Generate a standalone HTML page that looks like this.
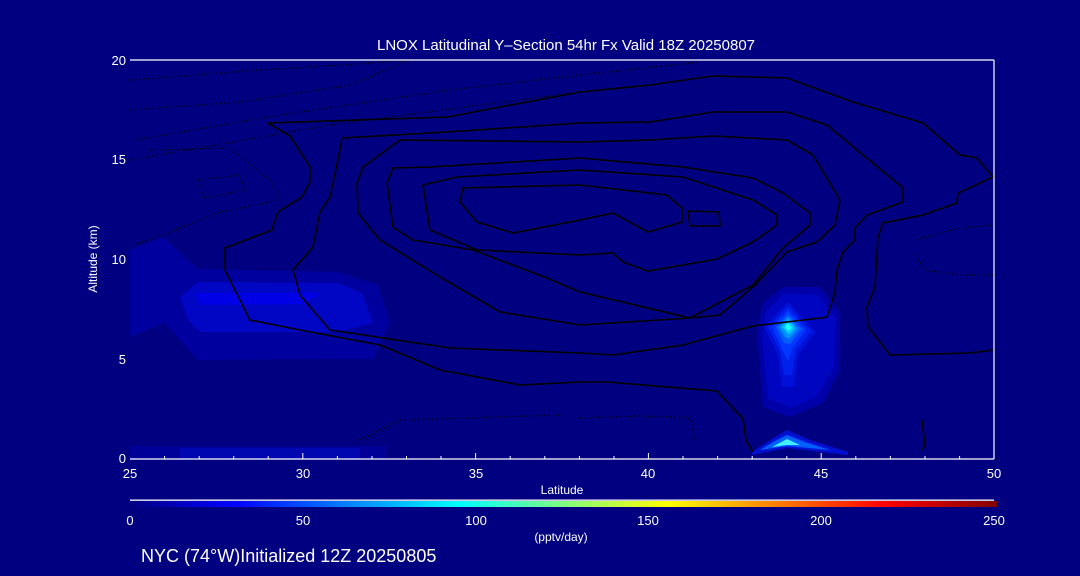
<!DOCTYPE html>
<html><head><meta charset="utf-8"><style>
html,body{margin:0;padding:0;background:#000080;width:1080px;height:576px;overflow:hidden}
svg{display:block}
text{font-family:"Liberation Sans",sans-serif;fill:#fff}
</style></head><body>
<svg width="1080" height="576" viewBox="0 0 1080 576" xmlns="http://www.w3.org/2000/svg">
<defs>
<linearGradient id="jet" x1="0" x2="1" y1="0" y2="0">
<stop offset="0" stop-color="#000080"/><stop offset="0.12" stop-color="#0000ff"/><stop offset="0.38" stop-color="#00ffff"/><stop offset="0.62" stop-color="#ffff00"/><stop offset="0.87" stop-color="#ff0000"/><stop offset="1" stop-color="#800000"/>
</linearGradient>
</defs>
<!-- left patch -->
<polygon points="130,250 163,237 198,269 338,272 378,285 390,323 373,359 198,360 165,323 130,337" fill="#00009e"/>
<polygon points="180,297 198,282 338,283 362,293 373,323 338,332 200,332 188,320" fill="#0006c4"/>
<polygon points="195,293 322,293 302,304 200,305" fill="#0000e6"/>
<polygon points="130,446 385,446 385,459 130,459" fill="#000098"/>
<polygon points="180,448 360,448 360,459 180,459" fill="#0006b0"/>
<!-- plume -->
<polygon points="763,303 783,287 820,287 840,313 840,370 823,403 790,417 763,407 757,330" fill="#0000a8"/>
<polygon points="766,312 784,293 818,295 836,318 834,368 816,397 790,408 768,398 762,335" fill="#0006c0"/>
<g transform="translate(788,327)">
<polygon points="-24,0 0,-25 28,5 10,28 6,60 -6,60 -10,28" fill="#0010d8"/>
<polygon points="-20,0 0,-21 23,4 8,24 4,48 -4,48 -8,24" fill="#0020ec"/>
<polygon points="-16,0 0,-17 18,3 4,22 0,34 -6,22" fill="#0038ff"/>
<polygon points="-12,0 0,-13 14,2 2,17 -4,16" fill="#0060ff"/>
<polygon points="-9,0 0,-10 10,2 1,12 -3,10" fill="#0090ff"/>
<polygon points="-6,0 0,-7 7,1 1,8" fill="#00c8ff"/>
<polygon points="-3,0 0,-4 4,1 0,4" fill="#20ffff"/>
</g>
<!-- bottom arc -->
<path d="M752,452 L770,440 L787,430 L810,440 L848,452 L848,455 L787,448 L752,455 Z" fill="#0010d0"/>
<path d="M760,450 L775,441 L787,435 L805,442 L830,450 L787,446 Z" fill="#0060ff"/>
<path d="M772,447 L787,439 L800,445 L787,445 Z" fill="#40f0ff"/>
<!-- contours -->
<g fill="none" stroke="#000" stroke-width="1.6">
<path d="M268,123 L447,117 L580,92 L650,85 L713,76 L787,78 L853,102 L923,123 L960,155 L977,158 L993,177"/>
<path d="M268,123 L290,136 L310,167 L310,182 L302,197 L278,212 L272,230 L225,248 L225,270 L250,320 L300,330 L380,345 L440,370 L520,385 L580,382 L607,382 L717,391 L743,419 L746,440 L753,452"/>
<path d="M993,177 L958,193 L957,203 L923,215 L883,223 L878,237 L875,287 L867,307 L868,327 L890,355 L970,353 L993,350"/>
<path d="M342,138 L447,132 L580,123 L650,122 L713,112 L787,112 L827,125 L857,150 L903,188 L903,202 L867,215 L855,228 L855,240 L843,252 L837,270 L835,293 L827,317 L820,318 L753,326 L683,345 L613,355 L580,353 L450,348 L330,330 L300,295 L293,270 L313,247 L320,212 L330,197 L340,150 Z"/>
<path d="M400,140 L580,142 L650,140 L713,136 L787,140 L813,155 L840,200 L835,225 L817,242 L787,252 L755,285 L720,315 L690,318 L580,325 L500,312 L440,277 L380,240 L358,213 L357,183 L363,167 Z"/>
<path d="M430,167 L580,158 L683,167 L753,178 L783,193 L810,213 L810,225 L783,248 L753,285 L690,318 L580,292 L547,278 L473,250 L413,240 L393,227 L387,183 L393,168 Z"/>
<path d="M457,177 L580,170 L683,177 L753,200 L777,215 L777,225 L753,242 L717,259 L648,271 L623,262 L613,253 L580,255 L477,250 L430,230 L423,185 Z"/>
<path d="M463,188 L580,185 L667,195 L682,208 L682,222 L648,232 L613,213 L580,220 L513,233 L477,222 L460,202 Z"/>
<path d="M688,211 L719,212 L720,226 L690,226 Z"/>
<path d="M922,420 L925,445 L922,450"/>
</g>
<g fill="none" stroke="#000" stroke-width="1.2" stroke-dasharray="1.5,3">
<path d="M130,80 L260,70 L420,60"/>
<path d="M130,110 L240,102 L350,85 L410,60"/>
<path d="M135,140 L280,115 L450,90 L580,75 L700,62"/>
<path d="M130,160 L330,125 L480,105 L580,92"/>
<path d="M150,150 L230,148 L270,180 L280,200 L220,212 L170,232 L135,245"/>
<path d="M198,180 L240,175 L245,190 L205,198 Z"/>
<path d="M915,240 L960,228 L993,225"/>
<path d="M915,255 L925,270 L960,275 L993,275"/>
<path d="M580,418 L640,416 L690,418 L695,440"/>
<path d="M360,440 L400,420 L470,418 L560,415"/>
</g>
<!-- axes -->
<g stroke="#fff" stroke-width="1.2">
<line x1="130" y1="60" x2="994" y2="60"/>
<line x1="994" y1="60" x2="994" y2="459"/>
<line x1="130" y1="459" x2="994" y2="459"/>
</g>
<g stroke="#fff" stroke-width="1">
<path d="M164.6,459v-3M199.2,459v-3M233.7,459v-3M268.2,459v-3M337.4,459v-3M372,459v-3M406.5,459v-3M441,459v-3M510.2,459v-3M544.8,459v-3M579.4,459v-3M614,459v-3M683,459v-3M717.6,459v-3M752.2,459v-3M786.8,459v-3M855.8,459v-3M890.4,459v-3M925,459v-3M959.6,459v-3M302.8,459v-6M475.6,459v-6M648.4,459v-6M821.2,459v-6"/>
</g>
<rect x="130" y="499.5" width="864" height="1.3" fill="#fff"/>
<rect x="130" y="501" width="867" height="6" fill="url(#jet)"/>
<!-- text -->
<text x="566" y="50" font-size="15" text-anchor="middle">LNOX Latitudinal Y–Section 54hr  Fx Valid 18Z 20250807</text>
<g font-size="13" text-anchor="end">
<text x="126" y="65">20</text><text x="126" y="164">15</text><text x="126" y="264">10</text><text x="126" y="364">5</text><text x="126" y="463">0</text>
</g>
<text transform="translate(97,259) rotate(-90)" font-size="12" text-anchor="middle">Altitude (km)</text>
<g font-size="13" text-anchor="middle">
<text x="130" y="478">25</text><text x="303" y="478">30</text><text x="476" y="478">35</text><text x="648" y="478">40</text><text x="821" y="478">45</text><text x="994" y="478">50</text>
<text x="562" y="494" font-size="12">Latitude</text>
<text x="130" y="525">0</text><text x="303" y="525">50</text><text x="476" y="525">100</text><text x="648" y="525">150</text><text x="821" y="525">200</text><text x="994" y="525">250</text>
<text x="561" y="541" font-size="12">(pptv/day)</text>
</g>
<text x="141" y="562" font-size="18">NYC (74°W)Initialized 12Z 20250805</text>
</svg>
</body></html>
